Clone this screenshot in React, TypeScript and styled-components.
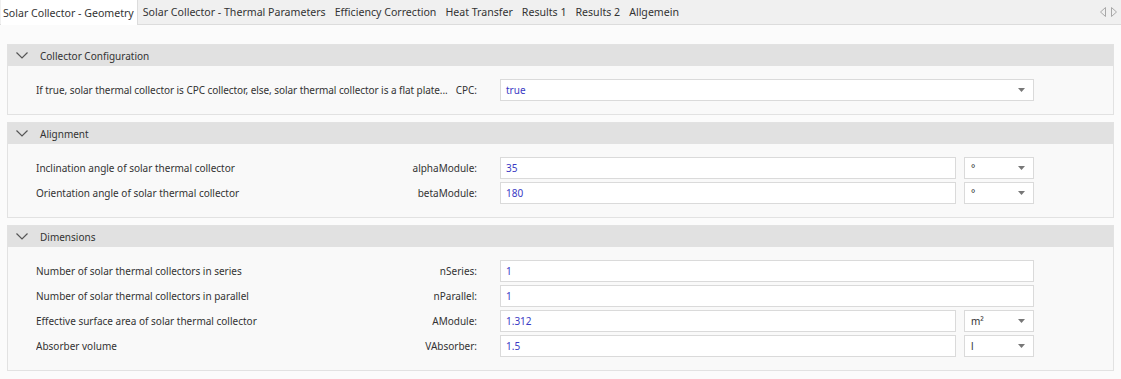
import React from "react";
import styled, { createGlobalStyle } from "styled-components";

const Global = createGlobalStyle`
  html, body { margin: 0; padding: 0; background: #fbfbfb; }
  body { font-family: "Noto Sans", "Open Sans", sans-serif; font-size: 10px; color: #333; }
`;

const Page = styled.div`
  width: 1121px;
  height: 379px;
  background: #fbfbfb;
  overflow: hidden;
`;

const TabBar = styled.div`
  display: flex;
  align-items: stretch;
  height: 24px;
  background: #f0f0f0;
  border-bottom: 1px solid #dcdcdc;
  padding-left: 1px;
  font-size: 10.6px;
`;

const Tab = styled.div<{ $active?: boolean }>`
  display: flex;
  align-items: center;
  padding: 0 3px 0 2px;
  margin-right: 3px;
  color: #333;
  white-space: nowrap;
  background: ${(p) => (p.$active ? "#ffffff" : "transparent")};
  border-right: ${(p) => (p.$active ? "1px solid #dcdcdc" : "1px solid transparent")};
  margin-bottom: ${(p) => (p.$active ? "-1px" : "0")};
`;

const TabArrows = styled.div`
  margin-left: auto;
  display: flex;
  align-items: center;
  gap: 5px;
  padding-right: 4px;
`;

const Content = styled.div`
  display: flex;
  flex-direction: column;
  gap: 7px;
  padding: 19px 7px 0 7px;
`;

const Panel = styled.section`
  border: 1px solid #e2e2e2;
  background: #f9f9f9;
`;

const Header = styled.div`
  display: flex;
  align-items: center;
  height: 21px;
  background: #e1e1e1;
  padding-left: 8px;
  gap: 12px;
  color: #333;
`;

const Body = styled.div`
  display: flex;
  flex-direction: column;
  gap: 3px;
  padding: 13px 0;
`;

const Row = styled.div`
  display: flex;
  align-items: center;
  height: 22px;
`;

const LabelCell = styled.div`
  display: flex;
  align-items: center;
  width: 441px;
  padding-left: 28px;
  flex-shrink: 0;
`;

const Desc = styled.div<{ $tight?: boolean }>`
  flex: 1;
  min-width: 0;
  white-space: nowrap;
  overflow: hidden;
  text-overflow: ellipsis;
  letter-spacing: ${(p) => (p.$tight ? "-0.06px" : "normal")};
`;

const Name = styled.div`
  flex-shrink: 0;
  margin-left: 3px;
  text-align: right;
  white-space: nowrap;
`;

const Field = styled.div<{ $w: number }>`
  box-sizing: border-box;
  width: ${(p) => p.$w}px;
  height: 22px;
  margin-left: 23px;
  background: #fff;
  border: 1px solid #dadada;
  display: flex;
  align-items: center;
  padding-left: 5px;
  color: #3a3ac4;
`;

const FullSelect = styled(Field)`
  justify-content: space-between;
  padding-right: 8px;
`;

const Unit = styled.div`
  box-sizing: border-box;
  width: 70px;
  height: 22px;
  margin-left: 8px;
  background: #fff;
  border: 1px solid #dadada;
  display: flex;
  align-items: center;
  justify-content: space-between;
  padding: 0 8px 0 6px;
  color: #333;
`;

const Caret = () => (
  <svg width="7" height="4" viewBox="0 0 7 4">
    <polygon points="0,0 7,0 3.5,4" fill="#777" />
  </svg>
);

const Chevron = () => (
  <svg width="12" height="7" viewBox="0 0 12 7">
    <polyline points="0.5,0.5 6,6 11.5,0.5" fill="none" stroke="#555" strokeWidth="1.2" />
  </svg>
);

const Arrow = ({ dir }: { dir: "l" | "r" }) => (
  <svg width="6" height="10" viewBox="0 0 6 10">
    <polygon
      points={dir === "l" ? "5.5,0.5 0.5,5 5.5,9.5" : "0.5,0.5 5.5,5 0.5,9.5"}
      fill="none"
      stroke="#a8a8a8"
      strokeWidth="1"
    />
  </svg>
);

type R = { desc: string; name: string; value: string; unit?: string; tight?: boolean };

const sections: { title: string; rows: R[] }[] = [
  {
    title: "Collector Configuration",
    rows: [
      {
        desc: "If true, solar thermal collector is CPC collector, else, solar thermal collector is a flat plate...",
        name: "CPC:",
        value: "true",
        unit: "select-full",
        tight: true,
      },
    ],
  },
  {
    title: "Alignment",
    rows: [
      { desc: "Inclination angle of solar thermal collector", name: "alphaModule:", value: "35", unit: "°" },
      { desc: "Orientation angle of solar thermal collector", name: "betaModule:", value: "180", unit: "°" },
    ],
  },
  {
    title: "Dimensions",
    rows: [
      { desc: "Number of solar thermal collectors in series", name: "nSeries:", value: "1" },
      { desc: "Number of solar thermal collectors in parallel", name: "nParallel:", value: "1" },
      { desc: "Effective surface area of solar thermal collector", name: "AModule:", value: "1.312", unit: "m²" },
      { desc: "Absorber volume", name: "VAbsorber:", value: "1.5", unit: "l" },
    ],
  },
];

const tabs = [
  "Solar Collector - Geometry",
  "Solar Collector - Thermal Parameters",
  "Efficiency Correction",
  "Heat Transfer",
  "Results 1",
  "Results 2",
  "Allgemein",
];

export default function App() {
  return (
    <Page>
      <Global />
      <TabBar>
        {tabs.map((t, i) => (
          <Tab key={t} $active={i === 0}>
            {t}
          </Tab>
        ))}
        <TabArrows>
          <Arrow dir="l" />
          <Arrow dir="r" />
        </TabArrows>
      </TabBar>
      <Content>
        {sections.map((s) => (
          <Panel key={s.title}>
            <Header>
              <Chevron />
              {s.title}
            </Header>
            <Body>
              {s.rows.map((r) => (
                <Row key={r.name}>
                  <LabelCell>
                    <Desc $tight={r.tight}>{r.desc}</Desc>
                    <Name>{r.name}</Name>
                  </LabelCell>
                  {r.unit === "select-full" ? (
                    <FullSelect $w={534}>
                      {r.value}
                      <Caret />
                    </FullSelect>
                  ) : r.unit ? (
                    <>
                      <Field $w={456}>{r.value}</Field>
                      <Unit>
                        {r.unit}
                        <Caret />
                      </Unit>
                    </>
                  ) : (
                    <Field $w={534}>{r.value}</Field>
                  )}
                </Row>
              ))}
            </Body>
          </Panel>
        ))}
      </Content>
    </Page>
  );
}
